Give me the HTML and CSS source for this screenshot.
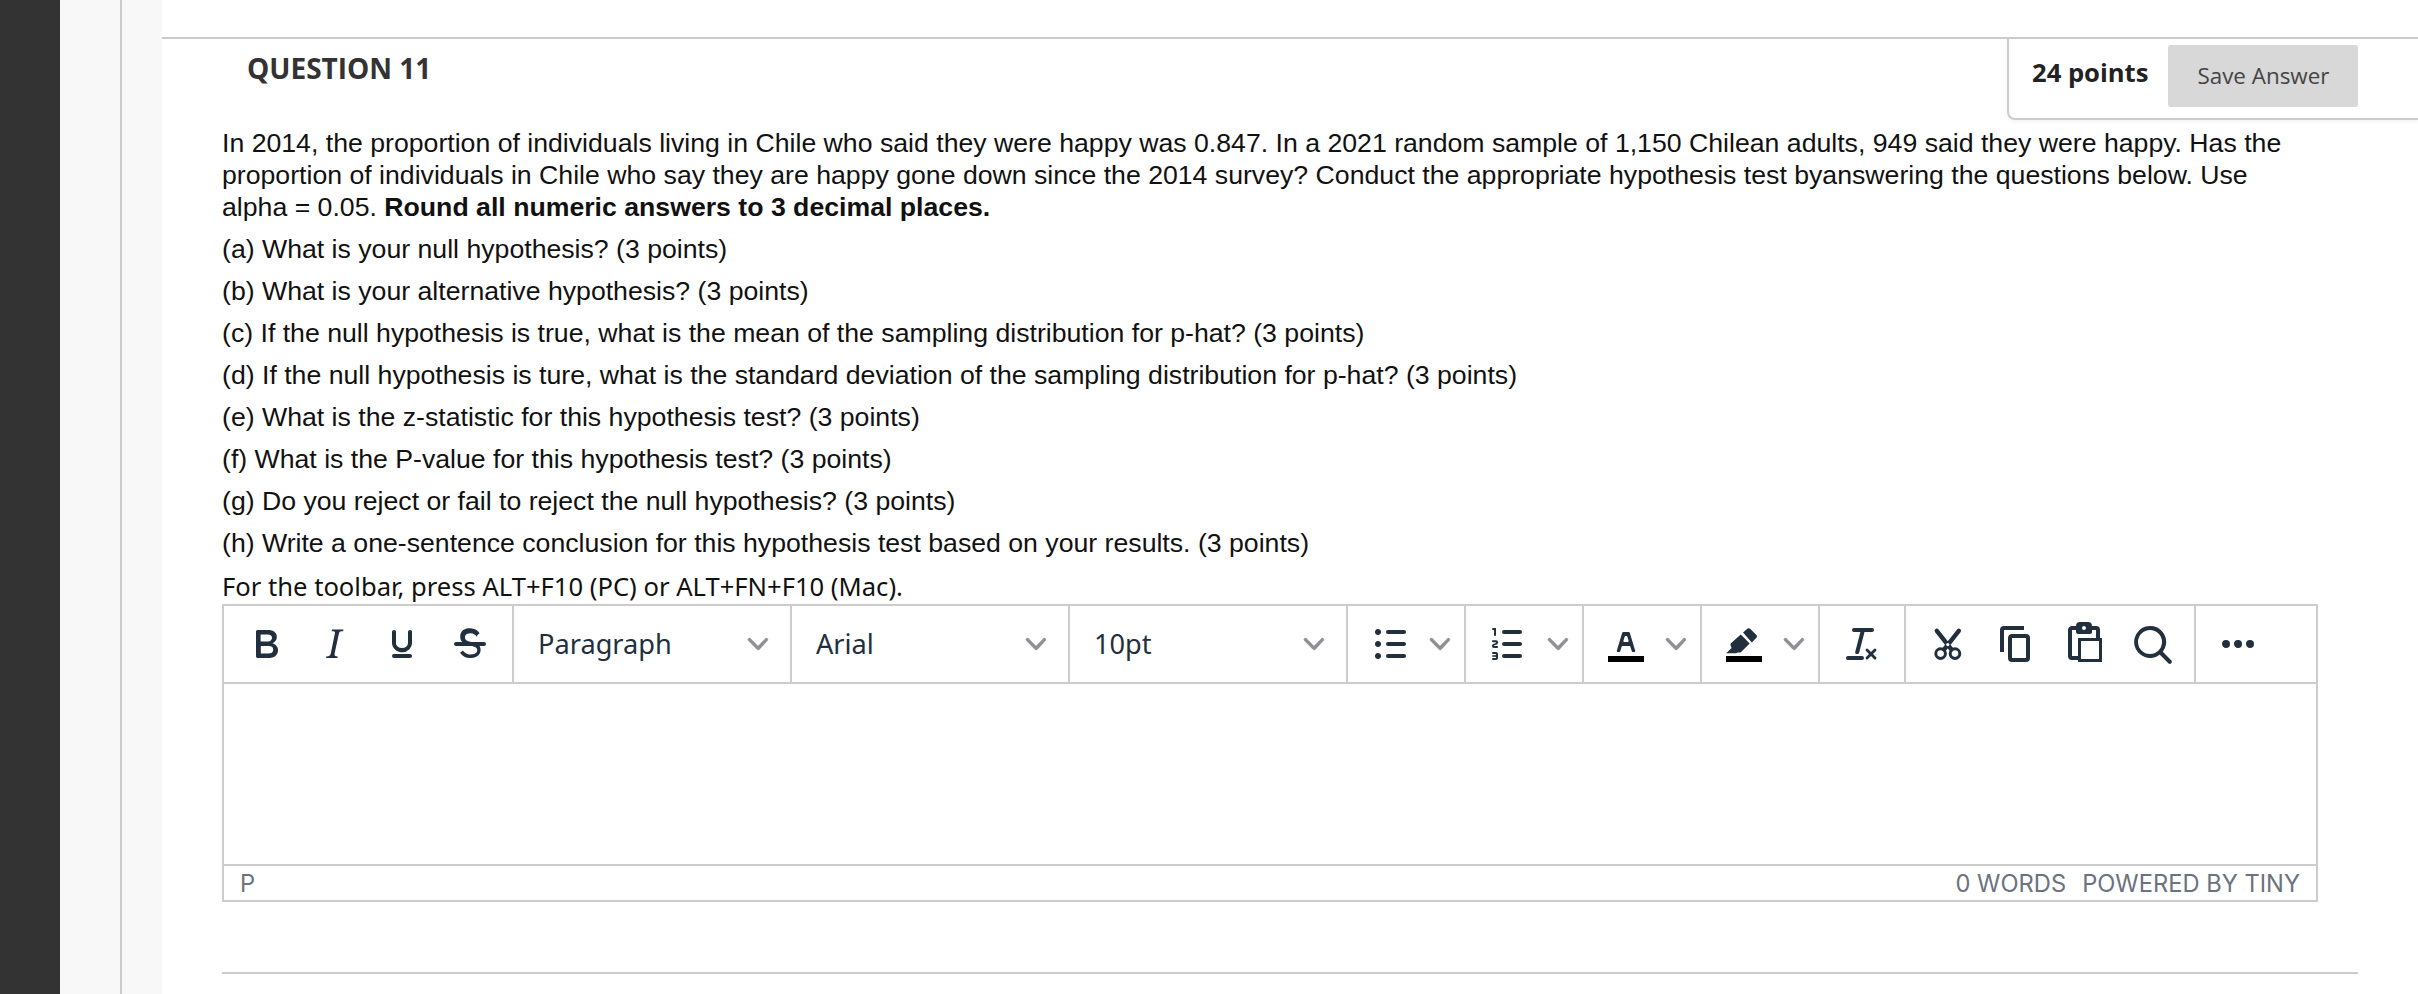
FILE: index.html
```html
<!DOCTYPE html>
<html lang="en">
<head>
<meta charset="utf-8">
<title>Question 11</title>
<link rel="stylesheet" href="styles.css">
</head>
<body>
<div class="page">
  <aside class="nav-dark"></aside>
  <aside class="rail"></aside>
  <aside class="rail-inner"></aside>
  <main class="main">
    <section class="question">
      <header class="q-head">
        <h2 class="q-title">QUESTION 11</h2>
        <div class="q-actions">
          <span class="q-points">24 points</span>
          <button class="q-save" type="button">Save Answer</button>
        </div>
      </header>
      <div class="q-body">
        <p class="q-intro">In 2014, the proportion of individuals living in Chile who said they were happy was 0.847. In a 2021 random sample of 1,150 Chilean adults, 949 said they were happy. Has the proportion of individuals in Chile who say they are happy gone down since the 2014 survey? Conduct the appropriate hypothesis test byanswering the questions below. Use alpha = 0.05. <strong>Round all numeric answers to 3 decimal places.</strong></p>
        <p class="q-item">(a) What is your null hypothesis? (3 points)</p>
        <p class="q-item">(b) What is your alternative hypothesis? (3 points)</p>
        <p class="q-item">(c) If the null hypothesis is true, what is the mean of the sampling distribution for p-hat? (3 points)</p>
        <p class="q-item">(d) If the null hypothesis is ture, what is the standard deviation of the sampling distribution for p-hat? (3 points)</p>
        <p class="q-item">(e) What is the z-statistic for this hypothesis test? (3 points)</p>
        <p class="q-item">(f) What is the P-value for this hypothesis test? (3 points)</p>
        <p class="q-item">(g) Do you reject or fail to reject the null hypothesis? (3 points)</p>
        <p class="q-item">(h) Write a one-sentence conclusion for this hypothesis test based on your results. (3 points)</p>
      </div>
      <p class="hint">For the toolbar, press ALT+F10 (PC) or ALT+FN+F10 (Mac).</p>
      <div class="editor">
        <div class="toolbar">
          <div class="tb-group">
            <span class="tb-btn"><svg class="ico" viewBox="0 0 24 24"><path d="M7.8 19c-.3 0-.5 0-.6-.2l-.2-.5V5.700c0-.2 0-.4.2-.5l.6-.2h5c1.500 0 2.700.3 3.500 1 .7.6 1.100 1.400 1.100 2.500a3 3 0 0 1-.6 1.900c-.4.6-1 1-1.600 1.200.4.1.9.3 1.300.6s.8.7 1 1.200c.4.4.5 1 .5 1.600 0 1.300-.4 2.300-1.300 3-.8.7-2.100 1-3.800 1H7.800zm5-8.300c.6 0 1.200-.1 1.600-.5.4-.3.6-.7.6-1.300 0-1.100-.8-1.700-2.300-1.700H9.300v3.500h3.400zm.5 6c.7 0 1.300-.1 1.700-.4.4-.4.6-.9.6-1.500s-.2-1-.7-1.400c-.4-.3-1-.4-2-.4H9.400v3.800h4z"/></svg></span>
            <span class="tb-btn"><svg class="ico" viewBox="0 0 24 24"><path d="M16.700 4.700l-.1.9h-.3c-.6 0-1 0-1.400.3-.3.3-.4.6-.5 1.100l-2.100 9.800v.6c0 .5.4.8 1.400.8h.2l-.2.8H8l.2-.8h.2c1.100 0 1.800-.5 2-1.500l2-9.800.1-.5c0-.6-.4-.8-1.400-.8h-.3l.2-.9h5.800z"/></svg></span>
            <span class="tb-btn"><svg class="ico" viewBox="0 0 24 24"><path d="M16 5c.6 0 1 .4 1 1v5.500a4 4 0 0 1-.4 1.800l-1 1.400a5.300 5.300 0 0 1-5.500 1 5 5 0 0 1-1.600-1c-.5-.4-.8-.9-1.100-1.400a4 4 0 0 1-.4-1.800V6c0-.6.4-1 1-1s1 .4 1 1v5.500c0 .3 0 .6.2 1l.6.7a3.300 3.300 0 0 0 2.200.8 3.400 3.400 0 0 0 2.200-.8c.3-.2.4-.5.6-.8l.2-.9V6c0-.6.4-1 1-1zM8 17h8c.6 0 1 .4 1 1s-.4 1-1 1H8a1 1 0 0 1 0-2z"/></svg></span>
            <span class="tb-btn"><svg class="ico" viewBox="0 0 24 24"><path d="M15.600 8.500c-.5-.7-1-1.100-1.300-1.300-.6-.4-1.300-.6-2-.6-2.700 0-2.800 1.700-2.800 2.100 0 1.600 1.800 2 3.200 2.300 4.400.9 4.600 2.800 4.600 3.900 0 1.400-.7 4.100-5 4.100A6.200 6.200 0 0 1 7 16.400l1.500-1.100c.4.6 1.600 2 3.700 2 1.600 0 2.500-.4 3-1 .3-.4.4-1 .4-1.300 0-.7-.3-1.400-2.200-1.900-1.100-.3-1-.2-2.400-.6-3.600-.9-3.900-3-3.900-4.200 0-2.900 2-4.200 4.800-4.200 1.600 0 2.800.5 3.500 1 .5.4 1 .9 1.400 1.500l-1.200 1z"/><path d="M5 11h14a1 1 0 0 1 0 2H5a1 1 0 0 1 0-2z"/></svg></span>
          </div>
          <div class="tb-group">
            <span class="tb-select"><span>Paragraph</span><svg class="chev" viewBox="0 0 10 10"><path d="M8.700 2.200c.3-.3.8-.3 1 0 .4.4.4.9 0 1.200L5.700 7.800c-.3.3-.9.3-1.200 0L.2 3.400a.8.8 0 0 1 0-1.200c.3-.3.8-.3 1.100 0L5 6l3.700-3.800z"/></svg></span>
          </div>
          <div class="tb-group">
            <span class="tb-select"><span>Arial</span><svg class="chev" viewBox="0 0 10 10"><path d="M8.700 2.200c.3-.3.8-.3 1 0 .4.4.4.9 0 1.200L5.700 7.800c-.3.3-.9.3-1.200 0L.2 3.400a.8.8 0 0 1 0-1.200c.3-.3.8-.3 1.100 0L5 6l3.700-3.800z"/></svg></span>
          </div>
          <div class="tb-group">
            <span class="tb-select"><span>10pt</span><svg class="chev" viewBox="0 0 10 10"><path d="M8.700 2.200c.3-.3.8-.3 1 0 .4.4.4.9 0 1.200L5.700 7.800c-.3.3-.9.3-1.200 0L.2 3.400a.8.8 0 0 1 0-1.200c.3-.3.8-.3 1.100 0L5 6l3.700-3.800z"/></svg></span>
          </div>
          <div class="tb-group">
            <span class="tb-btn"><svg class="ico" viewBox="0 0 24 24"><path d="M11 5h8c.6 0 1 .4 1 1s-.4 1-1 1h-8a1 1 0 0 1 0-2zm0 6h8c.6 0 1 .4 1 1s-.4 1-1 1h-8a1 1 0 0 1 0-2zm0 6h8c.6 0 1 .4 1 1s-.4 1-1 1h-8a1 1 0 0 1 0-2zM4.500 6c0-.4.1-.8.4-1 .3-.4.7-.5 1.100-.5s.8.1 1 .4c.4.3.5.7.5 1.100s-.1.8-.4 1c-.3.4-.7.5-1.100.5s-.8-.1-1-.4c-.4-.3-.5-.7-.5-1.100zm0 6c0-.4.1-.8.4-1 .3-.4.7-.5 1.100-.5s.8.1 1 .4c.4.3.5.7.5 1.100s-.1.8-.4 1c-.3.4-.7.5-1.100.5s-.8-.1-1-.4c-.4-.3-.5-.7-.5-1.100zm0 6c0-.4.1-.8.4-1 .3-.4.7-.5 1.100-.5s.8.1 1 .4c.4.3.5.7.5 1.100s-.1.8-.4 1c-.3.4-.7.5-1.100.5s-.8-.1-1-.4c-.4-.3-.5-.7-.5-1.100z"/></svg></span>
            <span class="tb-caret"><svg class="chev" viewBox="0 0 10 10"><path d="M8.700 2.200c.3-.3.8-.3 1 0 .4.4.4.9 0 1.200L5.700 7.800c-.3.3-.9.3-1.200 0L.2 3.400a.8.8 0 0 1 0-1.200c.3-.3.8-.3 1.100 0L5 6l3.700-3.800z"/></svg></span>
          </div>
          <div class="tb-group">
            <span class="tb-btn"><svg class="ico" viewBox="0 0 24 24"><path d="M10 17h8c.6 0 1 .4 1 1s-.4 1-1 1h-8a1 1 0 0 1 0-2zm0-6h8c.6 0 1 .4 1 1s-.4 1-1 1h-8a1 1 0 0 1 0-2zm0-6h8c.6 0 1 .4 1 1s-.4 1-1 1h-8a1 1 0 1 1 0-2zM6 4v3.500c0 .3-.2.5-.5.5a.5.5 0 0 1-.5-.5V5h-.5a.5.5 0 0 1 0-1H6zm-1 8.800l.2.2h1.300c.3 0 .5.2.5.5s-.2.5-.5.5H4.900a1 1 0 0 1-.9-1V13c0-.4.3-.8.6-1l1.200-.4.2-.3a.2.2 0 0 0-.2-.2H4.500a.5.5 0 0 1-.5-.5c0-.3.2-.5.5-.5h1.600c.5 0 .9.4.9 1v.1c0 .4-.3.8-.6 1l-1.200.4-.2.3zM7 17v2c0 .6-.4 1-1 1H4.500a.5.5 0 0 1 0-1h1.200c.2 0 .3-.1.3-.3 0-.2-.1-.3-.3-.3H4.400a.4.4 0 1 1 0-.8h1.300c.2 0 .3-.1.3-.3 0-.2-.1-.3-.3-.3H4.500a.5.5 0 1 1 0-1H6c.6 0 1 .4 1 1z"/></svg></span>
            <span class="tb-caret"><svg class="chev" viewBox="0 0 10 10"><path d="M8.700 2.200c.3-.3.8-.3 1 0 .4.4.4.9 0 1.200L5.700 7.800c-.3.3-.9.3-1.200 0L.2 3.400a.8.8 0 0 1 0-1.200c.3-.3.8-.3 1.100 0L5 6l3.700-3.800z"/></svg></span>
          </div>
          <div class="tb-group">
            <span class="tb-btn"><svg class="ico" viewBox="0 0 24 24"><path class="swatch" d="M3 18h18v3H3z"/><path d="M8.700 16h-.8a.5.5 0 0 1-.5-.6l2.700-9c.1-.3.3-.4.5-.4h2.800c.2 0 .4.1.5.4l2.700 9a.5.5 0 0 1-.5.6h-.8a.5.5 0 0 1-.4-.4l-.7-2.200c0-.3-.3-.4-.5-.4h-3.400c-.2 0-.4.1-.5.4l-.7 2.200c0 .3-.2.4-.4.4zm2.600-7.600l-.6 2a.5.5 0 0 0 .5.6h1.600a.5.5 0 0 0 .5-.6l-.6-2c0-.3-.3-.4-.5-.4h-.4c-.2 0-.4.1-.5.4z"/></svg></span>
            <span class="tb-caret"><svg class="chev" viewBox="0 0 10 10"><path d="M8.700 2.200c.3-.3.8-.3 1 0 .4.4.4.9 0 1.200L5.700 7.800c-.3.3-.9.3-1.200 0L.2 3.400a.8.8 0 0 1 0-1.200c.3-.3.8-.3 1.100 0L5 6l3.700-3.800z"/></svg></span>
          </div>
          <div class="tb-group">
            <span class="tb-btn"><svg class="ico" viewBox="0 0 24 24"><path class="swatch" d="M3 18h18v3H3z"/><path d="M5.300 11.700l5.100-4.500 4.400 4.500-4.500 4.500H8.800l-.7.400H3.100l2.700-2.600-.5-1.100z"/><path d="M11.500 6.300l2-1.800c.5-.5 1.200-.5 1.700 0l3 3c.4.4.4 1 0 1.400l-2.300 2.300z"/></svg></span>
            <span class="tb-caret"><svg class="chev" viewBox="0 0 10 10"><path d="M8.700 2.200c.3-.3.8-.3 1 0 .4.4.4.9 0 1.200L5.700 7.800c-.3.3-.9.3-1.200 0L.2 3.400a.8.8 0 0 1 0-1.200c.3-.3.8-.3 1.100 0L5 6l3.700-3.800z"/></svg></span>
          </div>
          <div class="tb-group">
            <span class="tb-btn"><svg class="ico" viewBox="0 0 24 24"><path d="M13.200 6a1 1 0 0 1 0 .2l-2.600 10a1 1 0 0 1-1 .8h-.2a.8.8 0 0 1-.8-1l2.600-10H8a1 1 0 1 1 0-2h9a1 1 0 0 1 0 2h-3.800zM5 18h7a1 1 0 0 1 0 2H5a1 1 0 0 1 0-2zm13 1.500L16.500 18 15 19.500a.7.7 0 0 1-1-1l1.500-1.500-1.500-1.500a.7.7 0 0 1 1-1l1.500 1.500 1.500-1.500a.7.7 0 0 1 1 1L17.500 17l1.500 1.500a.7.7 0 0 1-1 1z"/></svg></span>
          </div>
          <div class="tb-group">
            <span class="tb-btn"><svg class="ico" viewBox="0 0 24 24"><path class="blade" d="M6.400 5.400l7.300 9.300M17.400 5.400l-7.300 9.300"/><circle class="ring" cx="8.300" cy="16.800" r="2.400"/><circle class="ring" cx="15.500" cy="16.800" r="2.400"/><circle class="pivot" cx="11.900" cy="12.300" r=".8"/></svg></span>
            <span class="tb-btn"><svg class="ico" viewBox="0 0 24 24"><path d="M16 3H6a2 2 0 0 0-2 2v11h2V5h10V3zm1 4a2 2 0 0 1 2 2v10a2 2 0 0 1-2 2h-7a2 2 0 0 1-2-2V9c0-1.200.9-2 2-2h7zm0 12V9h-7v10h7z"/></svg></span>
            <span class="tb-btn"><svg class="ico" viewBox="0 0 24 24"><path fill-rule="evenodd" d="M18 9V5h-2v1c0 .6-.4 1-1 1H9a1 1 0 0 1-1-1V5H6v13h3V9h9zM9 20H6a2 2 0 0 1-2-2V5c0-1.100.9-2 2-2h2a2 2 0 0 1 2-2h4a2 2 0 0 1 2 2h2a2 2 0 0 1 2 2v4h1v12H9v-1zm1.500-9.500v9h9v-9h-9zM12 3a1 1 0 0 0-1 1c0 .5.4 1 1 1s1-.5 1-1-.4-1-1-1z"/></svg></span>
            <span class="tb-btn"><svg class="ico" viewBox="0 0 24 24"><path d="M16 17.300a8 8 0 1 1 1.400-1.400l4.300 4.400a1 1 0 0 1-1.400 1.400l-4.400-4.300zm-5-.3a6 6 0 1 0 0-12 6 6 0 0 0 0 12z"/></svg></span>
          </div>
          <div class="tb-group tb-last">
            <span class="tb-btn"><svg class="ico" viewBox="0 0 24 24"><path d="M6 10a2 2 0 0 0-2 2c0 1.100.9 2 2 2a2 2 0 0 0 2-2 2 2 0 0 0-2-2zm12 0a2 2 0 0 0-2 2c0 1.100.9 2 2 2a2 2 0 0 0 2-2 2 2 0 0 0-2-2zm-6 0a2 2 0 0 0-2 2c0 1.100.9 2 2 2a2 2 0 0 0 2-2 2 2 0 0 0-2-2z"/></svg></span>
          </div>
        </div>
        <div class="edit-area"></div>
        <div class="statusbar">
          <span>P</span>
          <span class="status-right"><span>0 WORDS</span><span>POWERED BY TINY</span></span>
        </div>
      </div>
      <hr class="rule">
    </section>
  </main>
</div>
</body>
</html>
```

FILE: styles.css
```css
* { box-sizing: border-box; }
html, body { margin: 0; height: 100%; overflow: hidden; background: #fff; }
.page { display: flex; height: 994px; }
.nav-dark { width: 60px; background: #333; flex: none; }
.rail { width: 62px; background: #f8f8f8; border-right: 2px solid #ccc; flex: none; }
.rail-inner { width: 40px; background: #f8f8f8; flex: none; }
.main { flex: 1; min-width: 0; padding-top: 37px; }
.question { border-top: 2px solid #ccc; padding: 0 60px; }
.q-head { display: flex; justify-content: space-between; align-items: flex-start; height: 82px; margin-bottom: 6px; margin-right: -60px; }
.q-title { margin: 11px 0 0 25px; font: 700 28px/36px "Open Sans", sans-serif; color: #333; }
.q-actions { width: 411px; height: 81px; display: flex; align-items: flex-start; padding: 6px 0 0 23px; border-left: 2px solid #ccc; border-bottom: 2px solid #ccc; border-bottom-left-radius: 8px; box-shadow: 0 2px 4px rgba(0,0,0,.05); }
.q-points { font: 700 25.6px/40px "Open Sans", sans-serif; color: #222; margin-right: 20px; padding-top: 8px; white-space: nowrap; }
.q-save { width: 190px; height: 62px; border: 0; border-radius: 3px; background: #d8d8d8; color: #444; font: 400 22.4px/1 "Open Sans", sans-serif; padding: 0; }
.q-body { font: 400 26.667px/32px "Liberation Sans", Arial, sans-serif; color: #111; }
.q-body p { margin: 0; }
.q-body .q-intro { padding-right: 60px; }
.q-body .q-item { margin-top: 10px; }
.hint { margin: 12px 0 0; font: 400 25.6px/32px "Noto Sans", sans-serif; color: #111; height: 33px; }
.editor { border: 2px solid #ccc; width: 2096px; }
.toolbar { display: flex; height: 78px; border-bottom: 2px solid #ccc; }
.tb-group { display: flex; align-items: center; padding: 0 8px; border-right: 2px solid #ccc; flex: none; }
.tb-last { border-right: 0; }
.tb-btn { width: 68px; height: 60px; display: flex; align-items: center; justify-content: center; }
.ico { width: 48px; height: 48px; fill: #222f3e; }
.swatch { fill: #000; }
.blade { fill: none; stroke: #222f3e; stroke-width: 2.2; stroke-linecap: round; }
.ring { fill: none; stroke: #222f3e; stroke-width: 1.5; }
.pivot { fill: #fff; }
.tb-select { width: 260px; display: flex; align-items: center; justify-content: space-between; padding: 0 14px 0 16px; font: 400 27.2px/40px "Noto Sans", sans-serif; color: #222f3e; }
.tb-caret { width: 32px; display: flex; align-items: center; justify-content: center; }
.chev { width: 20px; height: 20px; fill: #8d9197; stroke: #8d9197; stroke-width: .15; overflow: visible; flex: none; }
.edit-area { height: 180px; }
.statusbar { height: 36px; padding: 2px 16px 0; border-top: 2px solid #ccc; display: flex; justify-content: space-between; align-items: center; font: 400 23.7px/30px Inter, sans-serif; color: #6b7280; }
.status-right { display: flex; gap: 16px; }
.rule { border: 0; height: 2px; background: #ccc; margin: 70px 0 0; }
```
